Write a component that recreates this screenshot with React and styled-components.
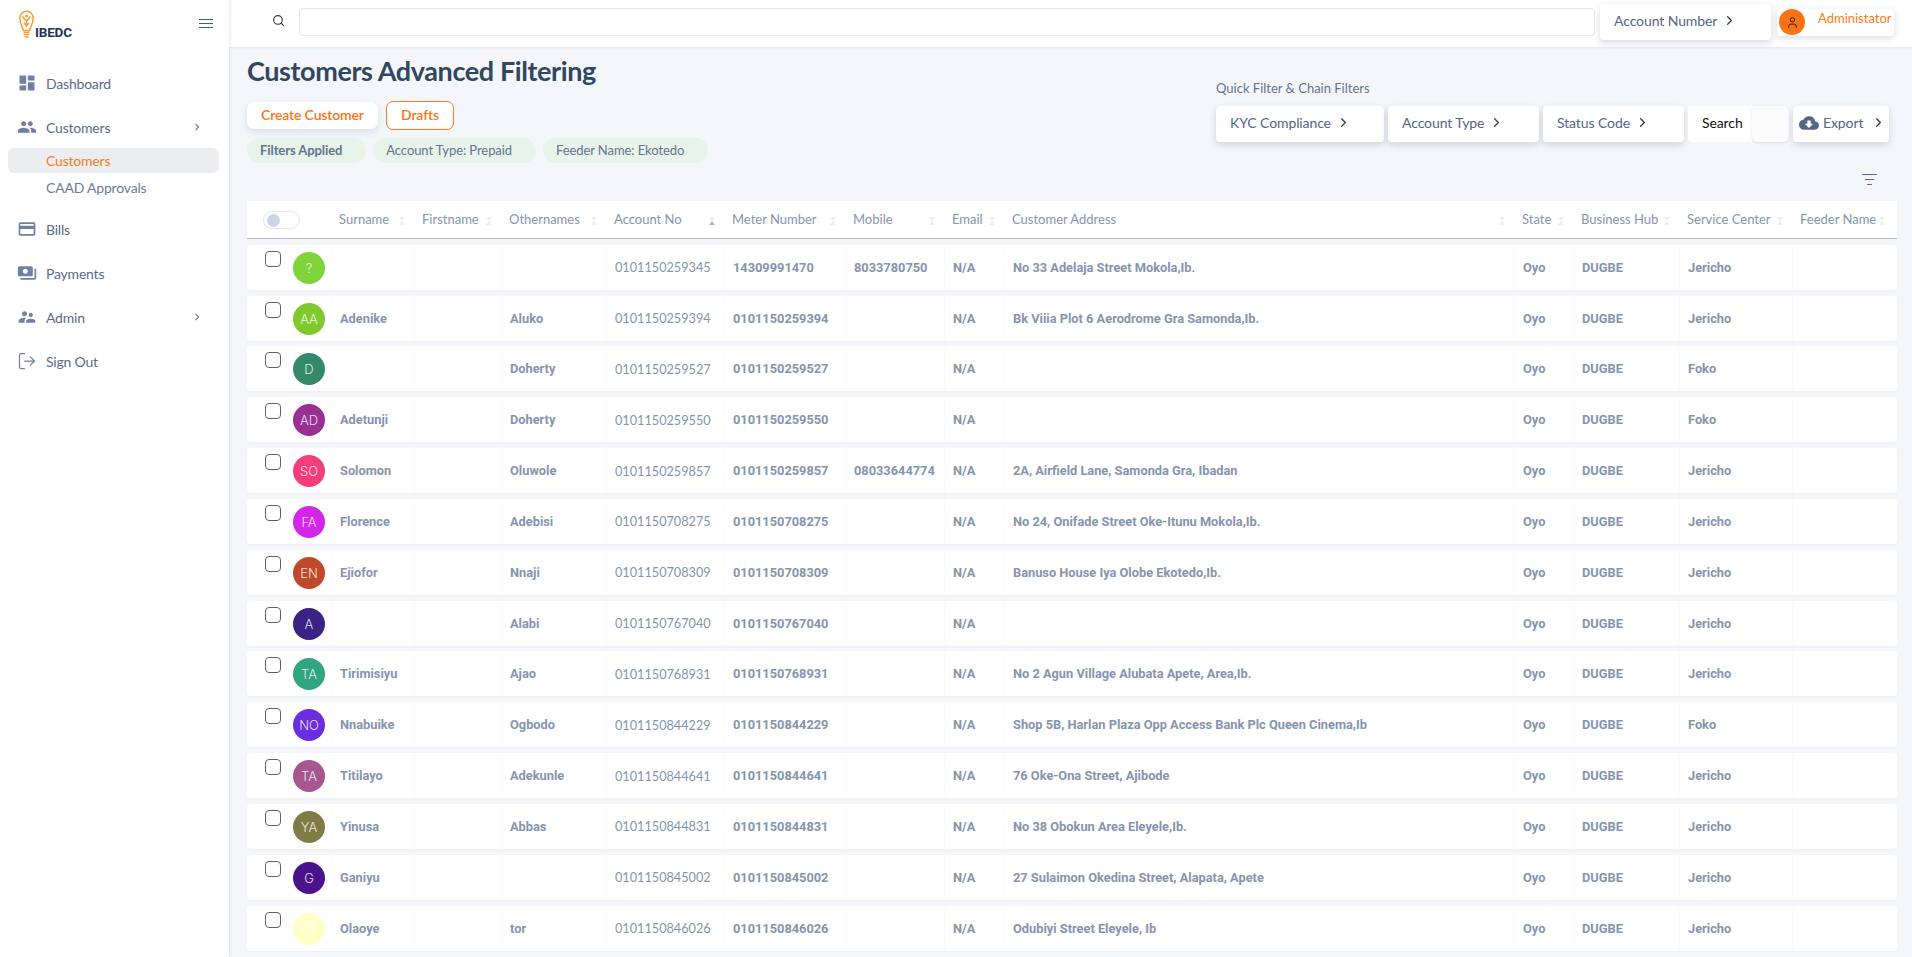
import styled, { createGlobalStyle } from 'styled-components';
import { MdDashboard, MdPeople, MdCreditCard, MdPayments, MdSupervisorAccount, MdCloudDownload, MdChevronRight } from 'react-icons/md';
import { Search, User, ChevronRight, LogOut, ListFilter } from 'lucide-react';

const GRID = '84px 83px 87px 105px 118px 121px 99px 60px 510px 59px 106px 113px 102px';

const GlobalStyle = createGlobalStyle`
  html, body { margin: 0; height: 100%; overflow: hidden; background: #f4f6fa; }
  * { box-sizing: border-box; }
  body { font-family: Lato, "Open Sans", sans-serif; }
`;

const Page = styled.div`
  display: flex;
  width: 1912px;
  height: 957px;
  overflow: hidden;
`;

const Sidebar = styled.aside`
  width: 229px;
  flex: none;
  background: #fff;
  box-shadow: 1px 0 2px rgba(60, 70, 100, 0.12);
  z-index: 2;
`;

const Brand = styled.div`
  height: 61px;
  padding: 10px 16px 0 19px;
  display: flex;
  justify-content: space-between;
  align-items: flex-start;
`;

const Logo = styled.div`
  display: flex;
  align-items: flex-end;
  height: 29px;
`;

const LogoText = styled.span`
  font-family: Roboto, sans-serif;
  font-weight: 700;
  font-size: 13.5px;
  line-height: 13px;
  letter-spacing: -0.2px;
  color: #1d3557;
  margin-left: 1px;
`;

const Burger = styled.button`
  border: 0;
  background: none;
  padding: 0;
  margin-top: 9px;
  width: 14px;
  height: 9px;
  border-top: 1px solid #4a5a78;
  border-bottom: 1px solid #4a5a78;
  display: flex;
  align-items: center;
  &::before { content: ''; display: block; width: 100%; height: 1px; background: #4a5a78; }
`;

const Nav = styled.nav`
  display: flex;
  flex-direction: column;
`;

const NavItem = styled.a`
  height: 44px;
  padding: 0 25px 0 17px;
  display: flex;
  align-items: center;
  gap: 9px;
  color: #5a6a8a;
  font-size: 14px;
  letter-spacing: -0.2px;
  svg { flex: none; color: #6f80a2; }
  span { flex: 1; }
`;

const SubItem = styled.a`
  height: 25px;
  margin: 0 10px 0 8px;
  padding-left: 38px;
  display: flex;
  align-items: center;
  border-radius: 6px;
  font-size: 14px;
  letter-spacing: -0.2px;
  color: ${(p) => (p.$active ? '#fb7a22' : '#6b7a96')};
  background: ${(p) => (p.$active ? '#ebedf1' : 'transparent')};
`;

const SubList = styled.div`
  display: flex;
  flex-direction: column;
  gap: 2px;
  margin: -1px 0 0;
  padding-bottom: 7px;
`;

const Main = styled.main`
  flex: 1;
  min-width: 0;
  display: flex;
  flex-direction: column;
`;

const Topbar = styled.header`
  height: 47px;
  flex: none;
  background: #fff;
  display: flex;
  padding: 4px 18px 0 43px;
  box-shadow: 0 1px 2px rgba(60, 70, 100, 0.08);
  z-index: 1;
`;

const SearchIcon = styled(Search)`
  margin: 10px 0 0;
  color: #333;
`;

const SearchInput = styled.input`
  width: 1296px;
  height: 28px;
  margin: 4px 5px 0 14px;
  border: 1px solid #e3e7ee;
  border-radius: 4px;
  background: #fff;
`;

const DropButton = styled.div`
  height: 36px;
  width: ${(p) => p.$w}px;
  flex: none;
  padding: 0 0 3px 14px;
  display: flex;
  align-items: center;
  gap: 5px;
  background: #fff;
  border-radius: 4px;
  color: #54658a;
  font-size: 14px;
  letter-spacing: -0.1px;
  white-space: nowrap;
  box-shadow: 0 3px 7px rgba(60, 70, 100, 0.2);
  svg { color: #333d50; }
`;

const Admin = styled.div`
  width: 117px;
  height: 27px;
  margin: 5px 0 0 6px;
  padding-left: 2px;
  display: flex;
  background: #fff;
  border-radius: 4px;
  box-shadow: 0 2px 6px rgba(60, 70, 100, 0.2);
`;

const AdminAvatar = styled.div`
  width: 26px;
  height: 26px;
  border-radius: 50%;
  background: #fb7314;
  display: flex;
  align-items: center;
  justify-content: center;
  color: #3a1a05;
`;

const AdminName = styled.span`
  margin: 1px 0 0 13px;
  font-size: 13px;
  color: #fb7a22;
`;

const Content = styled.section`
  flex: 1;
  padding: 0 15px 0 18px;
  background: #f4f6fa;
`;

const HeadRow = styled.div`
  display: flex;
  justify-content: space-between;
  height: 154px;
`;

const HeadLeft = styled.div`
  padding-top: 7px;
`;

const Title = styled.h1`
  margin: 0;
  font-size: 27px;
  line-height: 34px;
  font-weight: 700;
  letter-spacing: -0.4px;
  color: #30475f;
`;

const ActionRow = styled.div`
  display: flex;
  align-items: center;
  gap: 8px;
  margin-top: 13px;
`;

const ActionButton = styled.button`
  height: ${(p) => (p.$outlined ? 29 : 27)}px;
  width: ${(p) => p.$w}px;
  padding: 0 0 2px;
  border: ${(p) => (p.$outlined ? '1px solid #fb7a22' : '0')};
  border-radius: 7px;
  background: #fff;
  color: #fb7314;
  font-family: inherit;
  font-size: 14px;
  font-weight: 600;
  letter-spacing: -0.15px;
  box-shadow: ${(p) => (p.$outlined ? 'none' : '0 3px 7px rgba(60, 70, 100, 0.14)')};
`;

const ChipRow = styled.div`
  display: flex;
  gap: 7px;
  margin-top: 8px;
`;

const Chip = styled.span`
  height: 25px;
  padding: 0 24px 1px 13px;
  display: flex;
  align-items: center;
  border-radius: 13px;
  background: #e8f3ea;
  color: #64748f;
  font-size: 13px;
  letter-spacing: -0.08px;
  font-weight: ${(p) => (p.$strong ? 700 : 400)};
`;

const HeadRight = styled.div`
  width: 673px;
  margin-right: 8px;
  padding-top: 33px;
  display: flex;
  flex-direction: column;
`;

const QuickLabel = styled.div`
  font-size: 13px;
  line-height: 16px;
  color: #64748f;
`;

const FilterRow = styled.div`
  display: flex;
  margin-top: 10px;
  gap: 4px;
`;

const SearchButton = styled(DropButton)`
  color: #111;
  border-radius: 4px 0 0 4px;
  box-shadow: none;
`;

const BlankButton = styled.div`
  width: 40px;
  height: 36px;
  margin-left: -4px;
  background: #fcfcfd;
  border-radius: 0 6px 6px 6px;
  box-shadow: 0 1px 3px rgba(60, 70, 100, 0.12);
`;

const ExportButton = styled(DropButton)`
  padding-left: 6px;
  gap: 4px;
  svg:first-child { color: #54658a; }
  svg:last-child { margin-left: 4px; }
`;

const FilterIconRow = styled.div`
  display: flex;
  justify-content: flex-end;
  height: 0;
  padding-right: 19px;
  svg { margin-top: -30px; color: #54658a; }
`;

const Table = styled.div`
  display: flex;
  flex-direction: column;
  gap: 5.84px;
`;

const HeaderRow = styled.div`
  display: grid;
  grid-template-columns: ${GRID};
  height: 38px;
  align-items: center;
  background: #fff;
  border-bottom: 1px solid #b3b8c0;
`;

const HeaderCell = styled.div`
  display: flex;
  align-items: center;
  justify-content: space-between;
  padding: 0 9px 2px 8px;
  font-size: 13px;
  color: #8695b0;
  white-space: nowrap;
`;

const Sort = styled.span`
  display: flex;
  flex-direction: column;
  margin-top: 5px;
  &::before, &::after {
    content: '';
    width: 0;
    height: 0;
    border-left: 3px solid transparent;
    border-right: 3px solid transparent;
  }
  &::before { border-top: 4px solid #eceef2; }
  &::after { border-bottom: 4px solid ${(p) => (p.$active ? '#a9b3c6' : '#eceef2')}; }
`;

const Toggle = styled.div`
  margin-left: 16px;
  width: 37px;
  height: 18px;
  padding: 2px 3px;
  border: 1px solid #e3e6ef;
  border-radius: 9px;
  background: #fff;
  &::before {
    content: '';
    display: block;
    width: 13px;
    height: 13px;
    border-radius: 50%;
    background: #cdd3e6;
  }
`;

const Row = styled.div`
  display: grid;
  grid-template-columns: ${GRID};
  height: 45px;
  background: #fff;
  border-radius: 4px;
  box-shadow: 0 1px 2px rgba(60, 70, 100, 0.04);
`;

const SelectCell = styled.div`
  display: flex;
  padding: 6px 0 0 18px;
`;

const Check = styled.input`
  appearance: none;
  width: 16px;
  height: 16px;
  margin: 0 12px 0 0;
  border: 1.5px solid #5f6368;
  border-radius: 4px;
  background: #fff;
`;

const Avatar = styled.div`
  width: 32px;
  height: 32px;
  margin-top: 1px;
  flex: none;
  border-radius: 50%;
  display: flex;
  align-items: center;
  justify-content: center;
  background: ${(p) => p.$color};
  color: rgba(255, 255, 255, 0.85);
  font-family: Inter, sans-serif;
  font-weight: 300;
  font-size: 13px;
`;

const Cell = styled.div`
  display: flex;
  align-items: center;
  min-width: 0;
  padding: 0 0 0 8px;
  border-left: 1px solid #fafbfc;
  color: #8594ae;
  white-space: nowrap;
  font-family: ${(p) => (p.$plain ? 'Lato, sans-serif' : 'Roboto, sans-serif')};
  font-size: ${(p) => (p.$plain ? '12.7px' : '12.8px')};
  font-weight: ${(p) => (p.$plain ? 400 : 700)};
`;

const columns = ['Surname', 'Firstname', 'Othernames', 'Account No', 'Meter Number', 'Mobile', 'Email', 'Customer Address', 'State', 'Business Hub', 'Service Center', 'Feeder Name'];

const customers = [
  { i: '?', c: '#7fd43a', s: '', o: '', a: '0101150259345', m: '14309991470', p: '8033780750', addr: 'No 33 Adelaja Street Mokola,Ib.', sc: 'Jericho' },
  { i: 'AA', c: '#80c92c', s: 'Adenike', o: 'Aluko', a: '0101150259394', m: '0101150259394', p: '', addr: 'Bk Viiia Plot 6 Aerodrome Gra Samonda,Ib.', sc: 'Jericho' },
  { i: 'D', c: '#348a68', s: '', o: 'Doherty', a: '0101150259527', m: '0101150259527', p: '', addr: '', sc: 'Foko' },
  { i: 'AD', c: '#9a2f92', s: 'Adetunji', o: 'Doherty', a: '0101150259550', m: '0101150259550', p: '', addr: '', sc: 'Foko' },
  { i: 'SO', c: '#f53d7a', s: 'Solomon', o: 'Oluwole', a: '0101150259857', m: '0101150259857', p: '08033644774', addr: '2A, Airfield Lane, Samonda Gra, Ibadan', sc: 'Jericho' },
  { i: 'FA', c: '#d426e8', s: 'Florence', o: 'Adebisi', a: '0101150708275', m: '0101150708275', p: '', addr: 'No 24, Onifade Street Oke-Itunu Mokola,Ib.', sc: 'Jericho' },
  { i: 'EN', c: '#bf4a2b', s: 'Ejiofor', o: 'Nnaji', a: '0101150708309', m: '0101150708309', p: '', addr: 'Banuso House Iya Olobe Ekotedo,Ib.', sc: 'Jericho' },
  { i: 'A', c: '#3a2385', s: '', o: 'Alabi', a: '0101150767040', m: '0101150767040', p: '', addr: '', sc: 'Jericho' },
  { i: 'TA', c: '#2fa580', s: 'Tirimisiyu', o: 'Ajao', a: '0101150768931', m: '0101150768931', p: '', addr: 'No 2 Agun Village Alubata Apete, Area,Ib.', sc: 'Jericho' },
  { i: 'NO', c: '#6a2ee0', s: 'Nnabuike', o: 'Ogbodo', a: '0101150844229', m: '0101150844229', p: '', addr: 'Shop 5B, Harlan Plaza Opp Access Bank Plc Queen Cinema,Ib', sc: 'Foko' },
  { i: 'TA', c: '#a85690', s: 'Titilayo', o: 'Adekunle', a: '0101150844641', m: '0101150844641', p: '', addr: '76 Oke-Ona Street, Ajibode', sc: 'Jericho' },
  { i: 'YA', c: '#807a45', s: 'Yinusa', o: 'Abbas', a: '0101150844831', m: '0101150844831', p: '', addr: 'No 38 Obokun Area Eleyele,Ib.', sc: 'Jericho' },
  { i: 'G', c: '#4b128e', s: 'Ganiyu', o: '', a: '0101150845002', m: '0101150845002', p: '', addr: '27 Sulaimon Okedina Street, Alapata, Apete', sc: 'Jericho' },
  { i: 'OT', c: '#ffffc8', s: 'Olaoye', o: 'tor', a: '0101150846026', m: '0101150846026', p: '', addr: 'Odubiyi Street Eleyele, Ib', sc: 'Jericho' },
];

function BulbLogo() {
  return (
    <svg width="15" height="29" viewBox="0 0 15 29" fill="none" stroke="#f5a030">
      <path d="M4.300 20.500C3.800 17 .8 14.500.8 8a6.700 6.700 0 0 1 13.400 0c0 6.500-3 9-3.500 12.500z" strokeWidth="1.500" />
      <circle cx="7.500" cy="6" r="1.500" fill="#f5a030" stroke="none" />
      <path d="M3.500 6.500 7.500 11l4-4.500M7.500 11v5M5 13l2.500 3 2.500-3" strokeWidth="1.500" />
      <path d="M4.500 22.200h6M4.500 24.500h6M5.500 26.800h4" strokeWidth="1.500" />
    </svg>
  );
}

export default function App() {
  return (
    <Page>
      <GlobalStyle />
      <Sidebar>
        <Brand>
          <Logo>
            <BulbLogo />
            <LogoText>IBEDC</LogoText>
          </Logo>
          <Burger aria-label="menu" />
        </Brand>
        <Nav>
          <NavItem><MdDashboard size={20} /><span>Dashboard</span></NavItem>
          <NavItem><MdPeople size={20} /><span>Customers</span><MdChevronRight size={14} /></NavItem>
          <SubList>
            <SubItem $active>Customers</SubItem>
            <SubItem>CAAD Approvals</SubItem>
          </SubList>
          <NavItem><MdCreditCard size={20} /><span>Bills</span></NavItem>
          <NavItem><MdPayments size={20} /><span>Payments</span></NavItem>
          <NavItem><MdSupervisorAccount size={20} /><span>Admin</span><MdChevronRight size={14} /></NavItem>
          <NavItem><LogOut size={20} strokeWidth={1.5} /><span>Sign Out</span></NavItem>
        </Nav>
      </Sidebar>
      <Main>
        <Topbar>
          <SearchIcon size={13} />
          <SearchInput />
          <DropButton $w={171}>Account Number <ChevronRight size={15} strokeWidth={2} /></DropButton>
          <Admin>
            <AdminAvatar><User size={13} strokeWidth={1.8} /></AdminAvatar>
            <AdminName>Administator</AdminName>
          </Admin>
        </Topbar>
        <Content>
          <HeadRow>
            <HeadLeft>
              <Title>Customers Advanced Filtering</Title>
              <ActionRow>
                <ActionButton $w={131}>Create Customer</ActionButton>
                <ActionButton $w={68} $outlined>Drafts</ActionButton>
              </ActionRow>
              <ChipRow>
                <Chip $strong>Filters Applied</Chip>
                <Chip>Account Type: Prepaid</Chip>
                <Chip>Feeder Name: Ekotedo</Chip>
              </ChipRow>
            </HeadLeft>
            <HeadRight>
              <QuickLabel>Quick Filter &amp; Chain Filters</QuickLabel>
              <FilterRow>
                <DropButton $w={168}>KYC Compliance <ChevronRight size={15} strokeWidth={2} /></DropButton>
                <DropButton $w={151}>Account Type <ChevronRight size={15} strokeWidth={2} /></DropButton>
                <DropButton $w={141}>Status Code <ChevronRight size={15} strokeWidth={2} /></DropButton>
                <SearchButton $w={64}>Search</SearchButton>
                <BlankButton />
                <ExportButton $w={96}><MdCloudDownload size={20} />Export <ChevronRight size={15} strokeWidth={2} /></ExportButton>
              </FilterRow>
            </HeadRight>
          </HeadRow>
          <FilterIconRow><ListFilter size={17} strokeWidth={1.4} /></FilterIconRow>
          <Table>
            <HeaderRow>
              <Toggle />
              {columns.map((name) => (
                <HeaderCell key={name}>{name}<Sort $active={name === 'Account No'} /></HeaderCell>
              ))}
            </HeaderRow>
            {customers.map((row) => (
              <Row key={row.a}>
                <SelectCell>
                  <Check type="checkbox" />
                  <Avatar $color={row.c}>{row.i}</Avatar>
                </SelectCell>
                <Cell>{row.s}</Cell>
                <Cell />
                <Cell>{row.o}</Cell>
                <Cell $plain>{row.a}</Cell>
                <Cell>{row.m}</Cell>
                <Cell>{row.p}</Cell>
                <Cell>N/A</Cell>
                <Cell>{row.addr}</Cell>
                <Cell>Oyo</Cell>
                <Cell>DUGBE</Cell>
                <Cell>{row.sc}</Cell>
                <Cell />
              </Row>
            ))}
          </Table>
        </Content>
      </Main>
    </Page>
  );
}
